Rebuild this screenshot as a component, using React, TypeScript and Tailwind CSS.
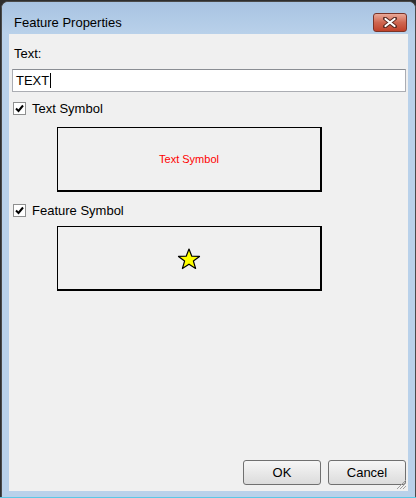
const font = { fontFamily: '"Liberation Sans", Arial, sans-serif' };

const CheckBox = ({ label }: { label: string }) => (
  <div className="flex items-center h-[15px]">
    <div className="w-[13px] h-[13px] border border-[#8e8f8f] bg-white flex items-center justify-center">
      <svg width="9" height="9" viewBox="0 0 9 9">
        <path d="M1 4.5 L3.5 7 L8 1.5" fill="none" stroke="#000" strokeWidth="2" />
      </svg>
    </div>
    <span className="ml-[6px] text-[13px] text-black leading-[15px]">{label}</span>
  </div>
);

const DialogButton = ({ label }: { label: string }) => (
  <button className="w-[78px] h-[25px] rounded-[3px] border border-[#707070] bg-gradient-to-b from-[#f6f6f6] to-[#dcdcdc] text-[13px] text-black leading-none">
    {label}
  </button>
);

export default function App() {
  return (
    <div className="w-[416px] h-[498px] bg-[#2e2e2e] flex flex-col overflow-hidden" style={font}>
      <div className="ml-[1px] mt-[1px] w-[415px] h-[496px] rounded-t-[7px] border border-[#4a4a4a] bg-[#b9d1ea] flex flex-col px-[7px] pb-[5px] border-b-0">
        {/* Title bar */}
        <div className="h-[32px] -mx-[7px] px-[7px] rounded-t-[6px] bg-gradient-to-b from-[#a8c3e2] to-[#b9d1ea] flex items-start shrink-0">
          <span className="ml-[5px] mt-[13px] text-[13px] text-black leading-[15px]">Feature Properties</span>
          <div className="ml-auto mr-[1px] mt-[11px] w-[34px] h-[19px] rounded-[3px] border border-[#7a3428] bg-gradient-to-b from-[#e9a898] via-[#cf6650] to-[#c0412a] flex items-center justify-center">
            <svg width="14" height="11" viewBox="0 0 14 11">
              <path d="M2 1.5 L12 9.5 M12 1.5 L2 9.5" stroke="#5a2a22" strokeWidth="4" strokeLinecap="round" />
              <path d="M2.5 2 L11.5 9 M11.5 2 L2.5 9" stroke="#ffffff" strokeWidth="2.2" strokeLinecap="round" />
            </svg>
          </div>
        </div>

        {/* Client area */}
        <div className="relative flex-1 bg-[#f0f0f0] flex flex-col px-[3px] pt-[12px]">
          <span className="ml-[2px] text-[13px] text-black leading-[15px]">Text:</span>

          <div className="mt-[8px] h-[23px] w-[394px] border border-[#abadb3] border-t-[#8a8d93] bg-white flex items-center px-[3px]">
            <span className="text-[13px] text-black leading-none">TEXT</span>
            <span className="ml-[1px] w-[1px] h-[15px] bg-black" />
          </div>

          <div className="mt-[9px] ml-[1px]">
            <CheckBox label="Text Symbol" />
          </div>

          <div className="mt-[11px] ml-[45px] w-[265px] h-[65px] border border-black border-r-2 border-b-2 flex items-center justify-center">
            <span className="text-[11px] text-[#ff0000] leading-none mt-[1px]">Text Symbol</span>
          </div>

          <div className="mt-[11px] ml-[1px]">
            <CheckBox label="Feature Symbol" />
          </div>

          <div className="mt-[8px] ml-[45px] w-[265px] h-[65px] border border-black border-r-2 border-b-2 flex items-center justify-center">
            <svg width="24" height="22" viewBox="0 0 24 22" className="mt-[1px]">
              <polygon
                points="12,1 14.8,8.2 22.5,8.4 16.4,13.1 18.6,20.5 12,16.2 5.4,20.5 7.6,13.1 1.5,8.4 9.2,8.2"
                fill="#ffff00"
                stroke="#000"
                strokeWidth="1.2"
                strokeLinejoin="round"
              />
            </svg>
          </div>

          <div className="mt-auto mb-[6px] -mr-[1px] flex justify-end gap-[7px]">
            <DialogButton label="OK" />
            <DialogButton label="Cancel" />
          </div>

          {/* size grip */}
          <svg width="12" height="12" viewBox="0 0 12 12" className="absolute right-[1px] bottom-[1px]">
            <path d="M11 2 L2 11 M11 5 L5 11 M11 8 L8 11" stroke="#a0a0a0" strokeWidth="1" />
          </svg>
        </div>
        <div className="h-[1px]" />
      </div>
      <div className="h-[1px] bg-[#5bc8e6]" />
    </div>
  );
}
